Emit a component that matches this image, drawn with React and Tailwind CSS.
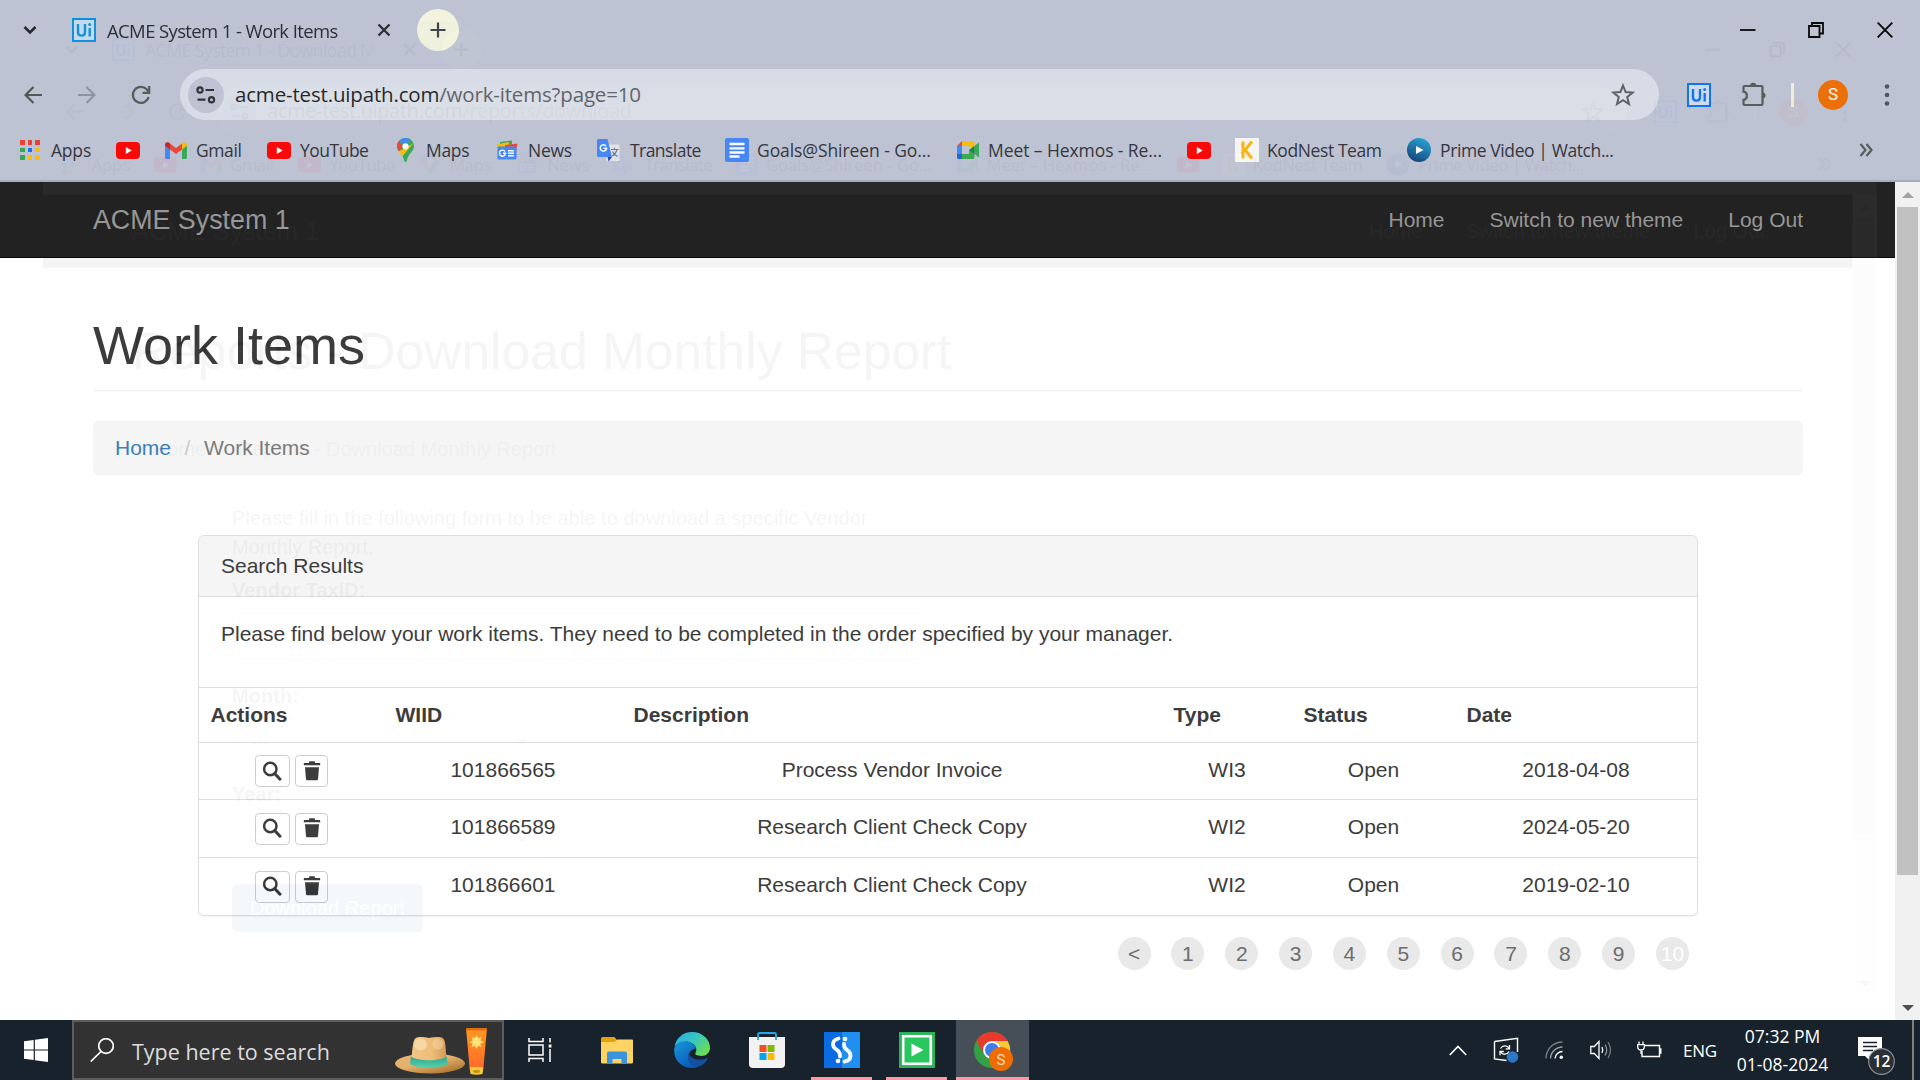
import React from "react";

const UI = "font-['Open_Sans','Noto_Sans',sans-serif]";

function UiLogo({ color, bg }) {
  return (
    <svg viewBox="0 0 24 24" className="h-6 w-6 shrink-0">
      <rect x="1" y="1" width="22" height="22" fill={bg} stroke={color} strokeWidth="2" />
      <path d="M6 6v8.200c0 4.600 7 4.600 7 0V6M17.700 10v8.500" fill="none" stroke={color} strokeWidth="2.400" />
      <circle cx="17.700" cy="6.600" r="1.500" fill={color} />
    </svg>
  );
}

function YouTube() {
  return (
    <svg viewBox="0 0 24 17" className="h-[17px] w-6 shrink-0">
      <rect width="24" height="17" rx="4" fill="#f00" />
      <path d="M9.800 5l6 3.500-6 3.500z" fill="#fff" />
    </svg>
  );
}

function AppsIcon() {
  const c = ["#ea4335", "#ea4335", "#ea4335", "#34a853", "#1a73e8", "#fbbc04", "#34a853", "#fbbc04", "#fbbc04"];
  return (
    <span className="grid h-[20px] w-[20px] shrink-0 grid-cols-3 gap-[3px]">
      {c.map((color, i) => (
        <span key={i} style={{ background: color }} />
      ))}
    </span>
  );
}

function Gmail() {
  return (
    <svg viewBox="0 0 22 17" className="h-[17px] w-[22px] shrink-0">
      <path d="M0 2.500V15.500Q0 17 1.500 17H5V7z" fill="#4285f4" />
      <path d="M22 2.500V15.500Q22 17 20.500 17H17V7z" fill="#34a853" />
      <path d="M5 7.500V1.500L11 6l6-4.500v6L11 12z" fill="#ea4335" />
      <path d="M0 2.500C0 0 3 -.5 5 1.200V7.500L0 3.800z" fill="#c5221f" />
      <path d="M22 2.500C22 0 19 -.5 17 1.200V7.500l5-3.700z" fill="#fbbc04" />
    </svg>
  );
}

function Maps() {
  return (
    <svg viewBox="0 0 17 24" className="h-6 w-[17px] shrink-0">
      <path d="M8.500 0C3.500 0 0 4 0 8.300c0 5 5.500 7.200 7 13.700.3 2.500 2.700 2.500 3 0 1.500-6.500 7-8.700 7-13.700C17 4 13.500 0 8.500 0z" fill="#34a853" />
      <path d="M2 2.900C.7 4.400 0 6.300 0 8.300c0 2 .8 3.500 1.800 5L6 8.300z" fill="#ea4335" />
      <path d="M1.800 13.300c1.100 1.600 2.600 3.100 3.700 5L16.300 5.200 11 8.500z" fill="#fbbc04" />
      <path d="M2.200 2.700L8 8l5.500-6.500A8.500 8.500 0 0 0 2.200 2.700z" fill="#4285f4" />
      <circle cx="8.500" cy="8.300" r="3.100" fill="#fff" />
    </svg>
  );
}

function News() {
  return (
    <svg viewBox="0 0 22 20" className="h-[20px] w-[22px] shrink-0">
      <path d="M4 2L16 .5v9H4z" fill="#34a853" />
      <path d="M.5 4.500l12-2.500 2 8H2z" fill="#fbbc04" />
      <path d="M9 5l12.500-1.500L20 12H9z" fill="#ea4335" />
      <rect x="1.500" y="6.500" width="19" height="13" rx="1.200" fill="#4285f4" />
      <path d="M9 11.500A3 3 0 1 0 9.500 13.300H7M12 10.700h6M12 13.200h6M12 15.700h6" stroke="#fff" strokeWidth="1.400" fill="none" />
    </svg>
  );
}

function Translate() {
  return (
    <svg viewBox="0 0 23 23" className="h-[23px] w-[23px] shrink-0">
      <rect x="9" y="5.500" width="13.500" height="16.500" rx="1.500" fill="#e4e6ea" />
      <path d="M14 10.500h7.500M17.500 8.800v1.700M20 10.500c-1 3.500-3 5.500-5 6.500M15.500 12.500c1 2.500 3 4 5 5" stroke="#6b7a8c" strokeWidth="1.200" fill="none" />
      <path d="M1.500 0h9l4.500 18H1.500Q0 18 0 16.500v-15Q0 0 1.500 0z" fill="#4285f4" />
      <path d="M10.500 18H15l-3.500 4.500z" fill="#2440b8" />
      <path d="M9 7A3.200 3.200 0 1 0 9.600 9.300H6.500" stroke="#fff" strokeWidth="1.500" fill="none" />
    </svg>
  );
}

function Docs() {
  return (
    <svg viewBox="0 0 24 24" className="h-6 w-6 shrink-0">
      <rect width="24" height="24" rx="2" fill="#4285f4" />
      <path d="M4.500 6h15M4.500 10.300h15M4.500 14.500h15M4.500 18.500h10" stroke="#fff" strokeWidth="2.300" />
    </svg>
  );
}

function Meet() {
  return (
    <svg viewBox="0 0 22 18" className="h-[18px] w-[22px] shrink-0">
      <path d="M5 0L0 5h5z" fill="#ea4335" />
      <path d="M5 0h11q1.500 0 1.500 1.500V6H12V5H5z" fill="#fbbc04" />
      <path d="M0 5h5v8H0z" fill="#4285f4" />
      <path d="M0 13h5v5H1.500Q0 18 0 16.500z" fill="#1967d2" />
      <path d="M5 13h7V9l5.500-4v11.500Q17.500 18 16 18H5z" fill="#34a853" />
      <path d="M12.500 9l5-4.200v8.400z" fill="#188038" />
      <path d="M17.500 5L22 1.500v15L17.500 13z" fill="#34a853" />
    </svg>
  );
}

function KodNest() {
  return (
    <svg viewBox="0 0 24 24" className="h-6 w-6 shrink-0">
      <rect width="24" height="24" fill="#f8f8f5" />
      <path d="M8 3.500v17M17 3.500L10 12l7 8.500" stroke="#fbb40c" strokeWidth="3" fill="none" />
      <path d="M6 7h2M6 15h2" stroke="#fbb40c" strokeWidth="1.500" />
    </svg>
  );
}

function Prime() {
  return (
    <svg viewBox="0 0 24 24" className="h-6 w-6 shrink-0">
      <defs>
        <linearGradient id="prime" x1="0.800" y1="0" x2="0.300" y2="1">
          <stop offset="0" stopColor="#22a5d6" />
          <stop offset="1" stopColor="#0d3f78" />
        </linearGradient>
      </defs>
      <circle cx="12" cy="12" r="12" fill="url(#prime)" />
      <path d="M9 8l7.500 4L9 16z" fill="#fff" />
    </svg>
  );
}

const bookmarks = [
  { icon: <AppsIcon />, label: "Apps", w: "w-[96px]", gap: "gap-[11px]", tr: "tracking-[-0.2px]" },
  { icon: <YouTube />, label: "", w: "w-[49px]", gap: "gap-0", tr: "" },
  { icon: <Gmail />, label: "Gmail", w: "w-[102px]", gap: "gap-[9px]", tr: "tracking-[-0.4px]" },
  { icon: <YouTube />, label: "YouTube", w: "w-[130px]", gap: "gap-[9px]", tr: "tracking-[-0.5px]" },
  { icon: <Maps />, label: "Maps", w: "w-[99px]", gap: "gap-[12px]", tr: "tracking-[-0.3px]" },
  { icon: <News />, label: "News", w: "w-[101px]", gap: "gap-[10px]", tr: "tracking-[-0.3px]" },
  { icon: <Translate />, label: "Translate", w: "w-[128px]", gap: "gap-[10px]", tr: "tracking-[-0.55px]" },
  { icon: <Docs />, label: "Goals@Shireen - Go...", w: "w-[232px]", gap: "gap-[8px]", tr: "tracking-[-0.08px]" },
  { icon: <Meet />, label: "Meet – Hexmos - Re...", w: "w-[230px]", gap: "gap-[9px]", tr: "tracking-[-0.08px]" },
  { icon: <YouTube />, label: "", w: "w-[48px]", gap: "gap-0", tr: "" },
  { icon: <KodNest />, label: "KodNest Team", w: "w-[172px]", gap: "gap-[8px]", tr: "tracking-[-0.4px]" },
  { icon: <Prime />, label: "Prime Video | Watch...", w: "w-[260px]", gap: "gap-[9px]", tr: "tracking-[-0.4px]" },
];

function TabStrip({ title }) {
  return (
    <div className="flex h-[60px] items-center">
      <svg viewBox="0 0 14 10" className="ml-[23px] h-[10px] w-[14px]">
        <path d="M1.500 2L7 7.500 12.500 2" fill="none" stroke="#26282c" strokeWidth="2.600" />
      </svg>
      <div className="ml-[35px] flex w-[297px] items-center">
        <UiLogo color="#0b8fdc" bg="#c6dcee" />
        <span className="mt-[2px] ml-[11px] w-[241px] overflow-hidden text-[18.500px] leading-6 tracking-[-0.620px] whitespace-nowrap text-[#26282c] [mask-image:linear-gradient(to_right,black_95%,transparent)]">{title}</span>
      </div>
      <svg viewBox="0 0 14 14" className="ml-[8px] h-[14px] w-[14px]">
        <path d="M1.500 1.500l11 11M12.500 1.500l-11 11" stroke="#26282c" strokeWidth="2.300" />
      </svg>
      <div className="ml-[26px] flex h-[42px] w-[42px] items-center justify-center rounded-full bg-[#f3f3df]">
        <svg viewBox="0 0 16 16" className="h-4 w-4">
          <path d="M8 .5v15M.5 8h15" stroke="#3c4043" strokeWidth="2.200" />
        </svg>
      </div>
      <div className="ml-auto flex items-center pr-[27px]">
        <svg viewBox="0 0 16 16" className="mr-[52px] h-4 w-4">
          <path d="M0 8h15.500" stroke="#000" strokeWidth="1.800" />
        </svg>
        <svg viewBox="0 0 16 16" className="mr-[53px] h-4 w-4">
          <path d="M1 4h10.500v11H1zM4 4V1h11v10.500h-3.500" fill="none" stroke="#000" strokeWidth="1.800" />
        </svg>
        <svg viewBox="0 0 16 16" className="h-4 w-4">
          <path d="M.7.700l14.600 14.600M15.300.700L.7 15.300" stroke="#000" strokeWidth="1.800" />
        </svg>
      </div>
    </div>
  );
}

function Toolbar({ path }) {
  return (
    <div className="flex h-[69px] items-center">
      <svg viewBox="0 0 18 18" className="ml-[24px] h-[18px] w-[18px]">
        <path d="M18 9H2M9.500 1L1.500 9l8 8" fill="none" stroke="#4e5a58" strokeWidth="2.200" />
      </svg>
      <svg viewBox="0 0 18 18" className="ml-[36px] h-[18px] w-[18px]">
        <path d="M0 9h16M8.500 1l8 8-8 8" fill="none" stroke="#8c93a0" strokeWidth="2.200" />
      </svg>
      <svg viewBox="0 0 20 20" className="ml-[35px] h-5 w-5">
        <path d="M17.600 12a8 8 0 1 1-1.800-7.500L18 7M18.200 1v6.800h-6.600" fill="none" stroke="#4e5a58" strokeWidth="2.200" />
      </svg>
      <div className="ml-[29px] flex h-[51px] w-[1479px] items-center rounded-full bg-[#dadee7] pr-[24px] pl-[8px]">
        <div className="flex h-9 w-9 items-center justify-center rounded-full bg-[#bfc4d5]">
          <svg viewBox="0 0 20 18" className="h-[18px] w-5">
            <g fill="none" stroke="#2a2d31" strokeWidth="2.200">
              <circle cx="4" cy="4" r="2.600" />
              <path d="M9.500 4h8.500M1.500 13.700h8" />
              <circle cx="15.500" cy="13.700" r="2.600" />
            </g>
          </svg>
        </div>
        <span className="mb-[1px] ml-[11px] text-[20.500px] leading-7 tracking-[-0.170px] whitespace-nowrap text-[#1d1f22]">
          acme-test.uipath.com<span className="text-[#5b5e66]">{path}</span>
        </span>
        <svg viewBox="0 0 24 24" className="ml-auto h-[24px] w-[24px]">
          <path d="M12 2.500l2.600 6.600 7 .5-5.400 4.500 1.800 6.900L12 17.200 6 21l1.800-6.900-5.400-4.500 7-.5z" fill="none" stroke="#5a5d62" strokeWidth="2" />
        </svg>
      </div>
      <div className="ml-[28px]">
        <UiLogo color="#0b72f0" bg="#cfdcf2" />
      </div>
      <svg viewBox="0 0 26 26" className="mb-[2px] ml-[30px] h-[26px] w-[26px]">
        <path d="M3.500 5h17q1 0 1 1v17q0 1-1 1h-17q-1 0-1-1v-4.200c4.500-.5 4.500-7.600 0-8.100V6q0-1 1-1z" fill="none" stroke="#4e5a58" strokeWidth="2.200" />
        <path d="M9 5a3.200 3.200 0 0 1 6.400 0zM21.500 11.500a3 3 0 0 1 0 6z" fill="#4e5a58" />
      </svg>
      <div className="ml-[24px] h-6 w-[3px] bg-[#f4f0dc]" />
      <div className="ml-[24px] flex h-[30px] w-[30px] items-center justify-center rounded-full bg-[#ef6c00] font-[Roboto,sans-serif] text-[17px] text-white">S</div>
      <svg viewBox="0 0 6 24" className="ml-[36px] h-6 w-[6px]">
        <circle cx="3" cy="3.500" r="2.300" fill="#4e5a58" />
        <circle cx="3" cy="12" r="2.300" fill="#4e5a58" />
        <circle cx="3" cy="20.500" r="2.300" fill="#4e5a58" />
      </svg>
    </div>
  );
}

function BookmarksBar() {
  return (
    <div className="flex h-[53px] items-start border-b-2 border-[#a7acbb] pl-[20px]">
      {bookmarks.map((b, i) => (
        <div key={i} className={`flex h-[42px] shrink-0 items-center ${b.w} ${b.gap}`}>
          {b.icon}
          {b.label && <span className={`mb-[1px] text-[17.500px] leading-6 whitespace-nowrap text-[#2f3136] ${b.tr}`}>{b.label}</span>}
        </div>
      ))}
      <svg viewBox="0 0 14 14" className="mt-[14px] ml-auto mr-[47px] h-[14px] w-[14px]">
        <path d="M1.500 1l5 6-5 6M7.500 1l5 6-5 6" fill="none" stroke="#4e5a58" strokeWidth="2.200" />
      </svg>
    </div>
  );
}

function Scrollbar({ thumb }) {
  return (
    <div className="flex w-[25px] flex-col items-center bg-[#f1f1f1]">
      <svg viewBox="0 0 12 6" className="my-[9.500px] h-[6px] w-3">
        <path d="M6 0l6 6H0z" fill="#a3a3a3" />
      </svg>
      <div className={`w-[21px] bg-[#c1c1c1] ${thumb}`} />
      <svg viewBox="0 0 12 6" className="mt-auto mb-[9px] h-[6px] w-3">
        <path d="M0 0h12L6 6z" fill="#505050" />
      </svg>
    </div>
  );
}

function BrowserWindow({ title, path, heading, thumb, children }) {
  return (
    <div className={`flex h-[1020px] w-[1920px] flex-col bg-[#bec3d4] ${UI}`}>
      <TabStrip title={title} />
      <Toolbar path={path} />
      <BookmarksBar />
      <div className="flex min-h-0 flex-1 bg-white font-['Liberation_Sans',Arial,sans-serif] text-[21px] leading-[30px] text-[#333]">
        <div className="flex-1">
          <nav className="flex h-[76px] items-center border-b border-[#080808] bg-[#222] pr-[92px] pl-[93px] text-[#9d9d9d]">
            <span className="text-[26.800px]">ACME System 1</span>
            <span className="ml-auto">Home</span>
            <span className="ml-[45px]">Switch to new theme</span>
            <span className="ml-[45px]">Log Out</span>
          </nav>
          <main className="pr-[92px] pl-[93px]">
            <h1 className="mt-[57px] h-[76px] border-b border-[#eee] text-[54px] leading-[60px]">{heading}</h1>
            <div className="mt-[30px] flex h-[54px] items-center rounded-[6px] bg-[#f5f5f5] pl-[22px]">
              <span className="text-[#337ab7]">Home</span>
              <span className="w-[33px] text-center text-[#ccc]">/</span>
              <span className="text-[#777]">{heading}</span>
            </div>
            {children}
          </main>
        </div>
        <Scrollbar thumb={thumb} />
      </div>
    </div>
  );
}

function SearchGlyph() {
  return (
    <svg viewBox="0 0 20 20" className="mr-[2px] mb-[1px] h-5 w-5">
      <circle cx="8.300" cy="8" r="6.200" fill="none" stroke="#333" strokeWidth="2.500" />
      <path d="M12.700 12.500l5.300 5.700" stroke="#333" strokeWidth="3" strokeLinecap="round" />
    </svg>
  );
}

function TrashGlyph() {
  return (
    <svg viewBox="0 0 18 20" className="mb-[1px] h-5 w-[18px]">
      <path d="M6 1.200Q6 .3 7 .3h4q1 0 1 .9v.8h4.500q.7 0 .7.700v1.600H.8V2.700Q.8 2 1.500 2H6z" fill="#333" />
      <path d="M2 6.200h14l-1 12q-.1 1.100-1.200 1.100H4.200q-1.100 0-1.200-1.100z" fill="#333" />
    </svg>
  );
}

const COLS = "grid grid-cols-[185px_238px_540px_130px_163px_242px]";

const rows = [
  ["101866565", "Process Vendor Invoice", "WI3", "Open", "2018-04-08"],
  ["101866589", "Research Client Check Copy", "WI2", "Open", "2024-05-20"],
  ["101866601", "Research Client Check Copy", "WI2", "Open", "2019-02-10"],
];
const heights = ["h-[57px]", "h-[58px]", "h-[58px]"];

function WorkItems() {
  return (
    <div className="px-[105px]">
      <section className="mt-[60px] overflow-hidden rounded-[6px] border border-[#ddd] shadow-[0_1px_2px_rgba(0,0,0,0.06)]">
        <div className="flex h-[61px] items-center border-b border-[#ddd] bg-[#f5f5f5] pl-[22px]">Search Results</div>
        <p className="h-[90px] pt-[22px] pl-[22px]">Please find below your work items. They need to be completed in the order specified by your manager.</p>
        <div className={`${COLS} h-[55px] items-center border-t border-[#ddd] font-bold`}>
          {["Actions", "WIID", "Description", "Type", "Status", "Date"].map((h) => (
            <span key={h} className="pl-[11.500px]">{h}</span>
          ))}
        </div>
        {rows.map((r, i) => (
          <div key={r[0]} className={`${COLS} ${heights[i]} items-center border-t border-[#ddd] text-center`}>
            <span className="flex justify-center gap-[5px]">
              <span className="flex h-8 w-[35px] items-center justify-center rounded-[4px] border border-[#ccc] bg-white"><SearchGlyph /></span>
              <span className="flex h-8 w-[33px] items-center justify-center rounded-[4px] border border-[#ccc] bg-white"><TrashGlyph /></span>
            </span>
            {r.map((c, j) => (
              <span key={j} className="pb-[3px]">{c}</span>
            ))}
          </div>
        ))}
      </section>
      <div className="mt-[21px] flex justify-end gap-[20.850px] pr-[9px]">
        {["<", "1", "2", "3", "4", "5", "6", "7", "8", "9", "10"].map((p) => (
          <span key={p} className={`flex h-[33px] w-[33px] items-center justify-center rounded-full bg-[#e8e8e8] ${p === "10" ? "text-white" : "text-[#666]"}`}>{p}</span>
        ))}
      </div>
    </div>
  );
}

function SelectBox() {
  return (
    <div className="flex h-[50px] w-[329px] items-center justify-between rounded-[6px] border border-[#ddd] px-[18px] text-[#888]">
      <span>---</span>
      <svg viewBox="0 0 12 6" className="h-[6px] w-3">
        <path d="M0 0h12L6 6z" fill="#777" />
      </svg>
    </div>
  );
}

function ReportForm() {
  return (
    <div className="flex flex-col items-start pl-[105px]">
      <p className="mt-[31px] w-[727px]">Please fill in the following form to be able to download a specific Vendor Monthly Report.</p>
      <b className="mt-[15px]">Vendor TaxID:</b>
      <div className="mt-[8px] h-[50px] w-[727px] rounded-[6px] border border-[#ddd]" />
      <b className="mt-[23px]">Month:</b>
      <div className="mt-[8px]"><SelectBox /></div>
      <b className="mt-[15px]">Year:</b>
      <div className="mt-[7px]"><SelectBox /></div>
      <div className="mt-[22px] flex h-[50px] w-[200px] items-center justify-center rounded-[6px] bg-[#337ab7] text-white">Download Report</div>
    </div>
  );
}

function Hat() {
  return (
    <svg viewBox="0 0 94 50" className="mt-[3px] h-[50px] w-[94px]">
      <defs>
        <linearGradient id="straw" x1="0" y1="0" x2="0.800" y2="1">
          <stop offset="0" stopColor="#e8b670" />
          <stop offset="0.500" stopColor="#e2b06a" />
          <stop offset="1" stopColor="#a87230" />
        </linearGradient>
        <linearGradient id="crown" x1="0" y1="0" x2="1" y2="0">
          <stop offset="0" stopColor="#f2c685" />
          <stop offset="0.600" stopColor="#edbd78" />
          <stop offset="1" stopColor="#cf9750" />
        </linearGradient>
        <linearGradient id="band" x1="0" y1="0" x2="0" y2="1">
          <stop offset="0" stopColor="#2fa58c" />
          <stop offset="1" stopColor="#52d2b0" />
        </linearGradient>
        <linearGradient id="tube" x1="0" y1="0" x2="0" y2="1">
          <stop offset="0" stopColor="#ff9a1f" />
          <stop offset="1" stopColor="#ff6b2b" />
        </linearGradient>
      </defs>
      <ellipse cx="35" cy="36.500" rx="35" ry="10" fill="url(#straw)" />
      <path d="M15 37C17.500 30 17 17 19.500 12.500c2-3.500 8-2.500 14.500-1.500 6.500-1 13-2 15 1.500C51.500 17 50.500 30 52.500 37c-8 4-30 4-37.500 0z" fill="url(#crown)" />
      <ellipse cx="25.500" cy="17.500" rx="6.500" ry="6" fill="#f9dcae" opacity=".8" />
      <ellipse cx="43" cy="17" rx="5.500" ry="5.500" fill="#f9dcae" opacity=".45" />
      <path d="M15.800 29.500c8 5 28.500 5 36 0l.7 7.500c-8 5-30 5-37.500 0z" fill="url(#band)" />
      <path d="M71 1h21l-3.500 39h-14z" fill="url(#tube)" />
      <rect x="71" y="1" width="21" height="2.500" fill="#e36b12" />
      <path d="M81.500 8l1.700 3.300 3.300-1.500-1.200 3.600 3.600 1.800-3.600 1.400 1.200 3.600-3.300-1.500-1.700 3.300-1.700-3.300-3.300 1.500 1.200-3.600-3.600-1.400 3.600-1.800-1.200-3.600 3.300 1.500z" fill="#ffe37a" />
      <path d="M74.500 40h14l-1 7q-6 1.500-12 0z" fill="#f5c93a" />
      <ellipse cx="81.500" cy="44.500" rx="3.500" ry="1.400" fill="#c98f14" />
    </svg>
  );
}

function Edge() {
  return (
    <svg viewBox="0 0 36 36" className="h-9 w-9">
      <defs>
        <linearGradient id="edgeTop" x1="0" y1="0" x2="1" y2="0.700">
          <stop offset="0" stopColor="#2aa8e8" />
          <stop offset="0.500" stopColor="#35c6c4" />
          <stop offset="1" stopColor="#6be04e" />
        </linearGradient>
        <linearGradient id="edgeLow" x1="0" y1="0" x2="0.600" y2="1">
          <stop offset="0" stopColor="#1896dc" />
          <stop offset="1" stopColor="#0a5bb8" />
        </linearGradient>
      </defs>
      <path d="M.5 15C2 6 9 0 18 0c11 0 18 8 18 15.500 0 5.500-4 8.500-8.500 8.500-5 0-7-1.800-6-3.200 1.500-2 1.300-6.500-3-9.300C12 8 3.500 10.500.5 15z" fill="url(#edgeTop)" />
      <path d="M.2 17C1 12 6 9 11 9c6 0 10.500 4 10.500 7.500 0 0-7 1-7 8 0 6 4.500 10.300 9.500 10.300C22 36 18 36 18 36 8 36-.8 28 .2 17z" fill="url(#edgeLow)" />
      <path d="M14.800 21c-2.300 6 1.700 13.500 8.700 14 4.500-1 8.500-4.500 10-8.300.2-.6-.3-.9-.8-.6C26 29.500 16 27 14.800 21z" fill="#164f9e" />
    </svg>
  );
}

function Chrome() {
  return (
    <svg viewBox="0 0 40 40" className="mt-[1px] h-10 w-10">
      <circle cx="18" cy="18" r="18" fill="#34a045" />
      <path d="M2.400 9A18 18 0 0 1 33.600 9H18a9 9 0 0 0-7.800 13.500z" fill="#e8392c" />
      <path d="M33.600 9A18 18 0 0 1 18 36l7.800-13.500A9 9 0 0 0 18 9z" fill="#fcc934" />
      <circle cx="18" cy="18" r="9" fill="#fff" />
      <circle cx="18" cy="18" r="7" fill="#3b7ded" />
      <circle cx="27" cy="27" r="12" fill="#ef6c00" />
      <text x="27" y="32.500" textAnchor="middle" fontSize="15" fill="#f7d9c0" fontFamily="Roboto, sans-serif">S</text>
    </svg>
  );
}

function Taskbar() {
  return (
    <div className={`flex h-[60px] w-[1920px] bg-[#18222c] text-white ${UI}`}>
      <div className="flex w-[72px] items-center justify-center">
        <svg viewBox="0 0 24 24" className="h-6 w-6">
          <path d="M0 3.300l9.700-1.300v9.500H0zM10.900 1.800L24 0v11.500H10.900zM0 12.600h9.700V22L0 20.700zM10.900 12.600H24V24l-13.100-1.800z" fill="#fff" />
        </svg>
      </div>
      <div className="flex w-[432px] items-center border-2 border-[#5d5d5d] bg-[#323232] pl-[16px]">
        <svg viewBox="0 0 24 24" className="h-6 w-6">
          <circle cx="16" cy="8" r="7.300" fill="none" stroke="#fff" strokeWidth="1.700" />
          <path d="M11 13.500L.7 23.500" stroke="#fff" strokeWidth="1.700" />
        </svg>
        <span className="mt-[3px] ml-[18px] text-[21.500px] leading-7 tracking-[0px] whitespace-nowrap text-[#dcdcdc]">Type here to search</span>
        <div className="ml-auto pr-[13px]"><Hat /></div>
      </div>
      <div className="flex w-[72px] items-center justify-center">
        <svg viewBox="0 0 24 24" className="h-6 w-6">
          <path d="M1 0v3.500h14V0M1 7h14v10H1zM1 24v-3.500h14V24M22 0v4.500M22 11v13" fill="none" stroke="#fff" strokeWidth="1.500" />
          <rect x="20.700" y="6.500" width="2.800" height="3" fill="#fff" />
        </svg>
      </div>
      <div className="flex w-[82px] items-center justify-center">
        <svg viewBox="0 0 32 27" className="h-[27px] w-8">
          <path d="M0 1.500Q0 0 1.500 0h12L16 3v5H0z" fill="#e3a10a" />
          <path d="M0 5h13.500L16.500 2.500H31q1 0 1 1V25q0 1.500-1.500 1.500h-29Q0 26.500 0 25z" fill="#fdd463" />
          <path d="M6 27V16.500q0-2 2-2h16q2 0 2 2V27h-5.500v-5h-9v5z" fill="#3a93dd" />
        </svg>
      </div>
      <div className="flex w-[68px] items-center justify-center"><Edge /></div>
      <div className="flex w-[81px] items-center justify-center">
        <svg viewBox="0 0 36 36" className="h-9 w-9">
          <path d="M9 7V2.500q0-1.500 1.500-1.500h15q1.500 0 1.500 1.500V7" fill="none" stroke="#27a8e4" strokeWidth="1.900" />
          <path d="M0 5h36v27q0 4-4 4H4q-4 0-4-4z" fill="#f2f2f2" />
          <path d="M9 8V5M27 8V5" stroke="#27a8e4" strokeWidth="1.900" />
          <rect x="10.500" y="13" width="7" height="7" fill="#f25022" />
          <rect x="18.500" y="13" width="7" height="7" fill="#7fba00" />
          <rect x="10.500" y="21" width="7" height="7" fill="#00a4ef" />
          <rect x="18.500" y="21" width="7" height="7" fill="#ffb900" />
        </svg>
      </div>
      <div className="mr-[14px] ml-[4px] flex w-[61px] flex-col items-center">
        <svg viewBox="0 0 36 36" className="mt-3 h-9 w-9">
          <rect width="36" height="36" fill="#0a6be2" />
          <path d="M18 0h18v36H18z" fill="#1f8ff0" />
          <path d="M14.500 6.500C10.500 7.500 9 10 9 12.500c0 5.500 7 4.500 7 10.500v1.500M20.500 29.500c4.500-.5 6-3 6-6 0-6-6.500-5-6.500-10.500v-1" fill="none" stroke="#fff" strokeWidth="3.800" strokeLinecap="round" />
          <circle cx="21" cy="7" r="2.300" fill="#fff" />
          <circle cx="14" cy="29" r="2.300" fill="#fff" />
        </svg>
        <div className="mt-auto h-[3px] w-full bg-[#ff97a3]" />
      </div>
      <div className="mr-[9px] flex w-[61px] flex-col items-center">
        <svg viewBox="0 0 36 36" className="mt-3 h-9 w-9">
          <rect width="36" height="36" fill="#28b457" />
          <rect x="4.200" y="4.200" width="27.600" height="27.600" fill="#2ac65e" stroke="#fff" strokeWidth="2.600" />
          <path d="M12.500 11.500L24.500 18l-12 6.500z" fill="#fff" />
        </svg>
        <div className="mt-auto h-[3px] w-full bg-[#ff97a3]" />
      </div>
      <div className="flex w-[73px] flex-col items-center bg-[#464f58]">
        <div className="mt-[11px] pl-[3px]"><Chrome /></div>
        <div className="mt-auto h-[3px] w-full bg-[#ff97a3]" />
      </div>
      <div className="ml-auto flex items-center">
        <svg viewBox="0 0 18 11" className="h-[11px] w-[18px]">
          <path d="M.8 10L9 1.500 17.200 10" fill="none" stroke="#fff" strokeWidth="1.700" />
        </svg>
        <svg viewBox="0 0 26 26" className="ml-[26px] h-[26px] w-[26px]">
          <path d="M1.500 4.500L24.500 1.200V15M1.500 4.500V22l12 1.500" fill="none" stroke="#fff" strokeWidth="1.400" />
          <path d="M7.500 11.500c2-3.500 7-3.500 8.500-.3M16.500 8v3.800h-3.800M16 14.500c-1.800 3.500-6.500 3.600-8.300.5M7 18.300v-3.800h3.800" fill="none" stroke="#fff" strokeWidth="1.300" />
          <circle cx="19.500" cy="20" r="5.800" fill="#2b78c5" />
        </svg>
        <svg viewBox="0 0 18 18" className="ml-[26px] h-[18px] w-[18px]">
          <g fill="none" strokeWidth="1.300">
            <path d="M1 17.500A16.500 16.500 0 0 1 17.500 1" stroke="#777f86" />
            <path d="M5.500 17.500A12 12 0 0 1 17.500 6" stroke="#9aa0a6" />
            <path d="M10 17.500a7.500 7.500 0 0 1 7.500-7" stroke="#fff" />
          </g>
          <circle cx="16.300" cy="16.300" r="1.700" fill="#fff" />
        </svg>
        <svg viewBox="0 0 22 20" className="ml-[27px] h-5 w-[22px]">
          <path d="M.8 6.500h3.500L9 1.500v17l-4.700-5H.8z" fill="none" stroke="#fff" strokeWidth="1.300" />
          <path d="M12 7q1.500 3 0 6" fill="none" stroke="#fff" strokeWidth="1.300" />
          <path d="M15 4.500q3.500 5.500 0 11" fill="none" stroke="#8b9197" strokeWidth="1.300" />
          <path d="M18 2q5 8 0 16" fill="none" stroke="#737a81" strokeWidth="1.300" />
        </svg>
        <svg viewBox="0 0 25 18" className="ml-[25px] h-[18px] w-[25px]">
          <path d="M8 4.500h14.500v11H5V10M22.500 8h1.300v4h-1.300" fill="none" stroke="#fff" strokeWidth="1.400" />
          <path d="M2 .5v3M6 .5v3M.7 3.700h6.600v2.500Q7 9 4 9T.7 6.200zM4 9v4" fill="none" stroke="#fff" strokeWidth="1.300" />
        </svg>
        <span className="mt-[2px] ml-[21px] w-[34px] text-[17px] leading-6 tracking-[-0.3px]">ENG</span>
        <div className="ml-[17px] flex w-[97px] flex-col items-center text-[17.500px] leading-[28px] tracking-[0px] whitespace-nowrap">
          <span>07:32 PM</span>
          <span>01-08-2024</span>
        </div>
        <svg viewBox="0 0 38 38" className="mt-[12px] ml-[27px] h-[38px] w-[38px]">
          <path d="M0 0h24v19H11l0 4-4-4H0z" fill="#fff" />
          <path d="M5 5.500h14M5 9.500h14M5 13.500h10" stroke="#18222c" strokeWidth="1.300" />
          <circle cx="23.500" cy="24.500" r="12.800" fill="#2b3036" stroke="#8b8f93" strokeWidth="1.200" />
          <text x="23.500" y="30" textAnchor="middle" fontSize="15.500" fontWeight="600" fill="#fff" fontFamily="Open Sans, sans-serif">12</text>
        </svg>
        <div className="mr-[6px] ml-[16px] h-[60px] w-[2px] bg-[#7c8084]" />
      </div>
    </div>
  );
}

export default function App() {
  return (
    <div className="relative h-[1080px] w-[1920px] overflow-hidden bg-white">
      <BrowserWindow title="ACME System 1 - Work Items" path="/work-items?page=10" heading="Work Items" thumb="h-[668px]">
        <WorkItems />
      </BrowserWindow>
      <Taskbar />
      {/* Fading previous window during the page transition */}
      <div className="pointer-events-none absolute top-[21px] left-[43px] origin-top-left scale-[0.955] opacity-[0.045]">
        <BrowserWindow title="ACME System 1 - Download Monthly Report" path="/reports/download" heading="Reports - Download Monthly Report" thumb="h-[644px]">
          <ReportForm />
        </BrowserWindow>
      </div>
    </div>
  );
}
